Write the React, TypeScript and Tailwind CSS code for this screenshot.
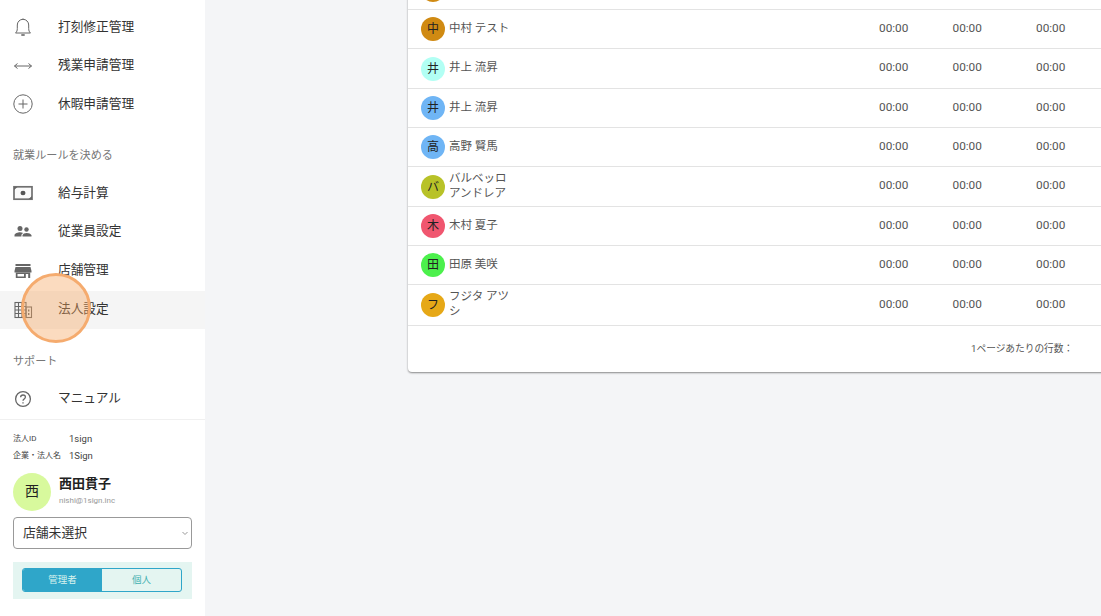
const font = { fontFamily: '"Roboto","Noto Sans CJK JP",sans-serif' };

function Bell() {
  return (
    <svg width="20" height="20" viewBox="0 0 20 20" fill="none" stroke="#666" strokeWidth="1">
      <path d="M2.500 16h15c-1.200-1-1.800-2.400-1.800-4.500V8a5.700 5.700 0 0 0-11.400 0v3.500c0 2.100-.6 3.500-1.800 4.500Z" />
      <path d="M10 1.500v1" />
      <path d="M8.300 18h3.400" strokeWidth="1.600" />
    </svg>
  );
}
function Arrows() {
  return (
    <svg width="20" height="20" viewBox="0 0 20 20" fill="none" stroke="#666" strokeWidth="1">
      <path d="M1.500 10h17M4.500 7.500 1.500 10l3 2.500M15.500 7.500l3 2.500-3 2.500" />
    </svg>
  );
}
function Plus() {
  return (
    <svg width="20" height="20" viewBox="0 0 20 20" fill="none" stroke="#666" strokeWidth="1">
      <circle cx="10" cy="10" r="9.200" />
      <path d="M10 5.500v9M5.500 10h9" />
    </svg>
  );
}
function Money() {
  return (
    <svg width="20" height="20" viewBox="0 0 20 20" fill="none">
      <rect x="1" y="3.800" width="18" height="12.400" fill="#fafafa" stroke="#707070" strokeWidth="1.700" />
      <path d="M1 4h3.500L1 7ZM19 16h-3.500l3.500-3Z" fill="#666" />
      <ellipse cx="10" cy="10" rx="2.500" ry="2.200" fill="#555" />
    </svg>
  );
}
function People() {
  return (
    <svg width="20" height="20" viewBox="0 0 20 20" fill="#666">
      <circle cx="7" cy="6.500" r="2.500" />
      <circle cx="13.500" cy="7.500" r="2.200" />
      <path d="M1.500 14.500v-1.200C1.500 11.400 5 10.300 7 10.300c.9 0 2.200.2 3.300.7-1.100.6-1.900 1.400-1.900 2.500v1h-6.900Z" />
      <path d="M9.500 14.500v-1C9.500 11.800 12 11 13.500 11s5 .8 5 2.500v1h-9Z" />
    </svg>
  );
}
function Store() {
  return (
    <svg width="20" height="20" viewBox="0 0 20 20" fill="#666">
      <rect x="2.500" y="3" width="15" height="2" />
      <path d="M2.500 6h15l1 4v1.500h-17V10l1-4Z" />
      <path fillRule="evenodd" d="M2.800 11.500h14.400V17h-2v-4h-2.400v4H2.800v-5.500Zm1.700 1.500v2.500h6.500V13H4.500Z" />
    </svg>
  );
}
function Building() {
  return (
    <svg width="20" height="20" viewBox="0 0 20 20" fill="none" stroke="#666" strokeWidth="1.100">
      <rect x="2" y="2.500" width="11" height="15" />
      <rect x="13" y="7" width="5.500" height="10.500" />
      <path d="M5.500 3v14M9 3v14M2 6.500h11M2 10h11M2 13.500h11" />
      <path d="M15.700 9.500v2M15.700 13v2" strokeWidth="1.400" />
    </svg>
  );
}
function Help() {
  return (
    <svg width="20" height="20" viewBox="0 0 20 20" fill="none" stroke="#666" strokeWidth="1.300">
      <circle cx="10" cy="10" r="7.400" />
      <path d="M7.600 8.200A2.400 2.400 0 0 1 10 6c1.400 0 2.400.9 2.400 2.100 0 1.800-2.400 1.900-2.400 3.600" />
      <path d="M10 13.200v1.300" />
    </svg>
  );
}

function NavItem({ icon, label, h = "h-[38.5px]", active = false }: { icon: React.ReactNode; label: string; h?: string; active?: boolean }) {
  return (
    <div className={`flex shrink-0 items-center pl-[13px] ${h} ${active ? "bg-[#f5f5f5]" : ""}`}>
      <span className="flex w-[20px] justify-center">{icon}</span>
      <span className="ml-[25px] pb-[1px] text-[12.7px] leading-[20px] text-[#333]">{label}</span>
    </div>
  );
}

function SectionLabel({ label, h }: { label: string; h: string }) {
  return <div className={`flex shrink-0 items-center pl-[13px] text-[11.1px] text-[#777] ${h}`}>{label}</div>;
}

const rows = [
  { c: "bg-[#d08a12]", a: "", n: "", h: "h-[39px]" },
  { c: "bg-[#d08a12]", a: "中", n: "中村 テスト", h: "h-[39px]" },
  { c: "bg-[#b2fff4]", a: "井", n: "井上 流昇", h: "h-[40px]" },
  { c: "bg-[#6fb5f5]", a: "井", n: "井上 流昇", h: "h-[39px]" },
  { c: "bg-[#6fb5f5]", a: "高", n: "高野 賢馬", h: "h-[39px]" },
  { c: "bg-[#b8c228]", a: "バ", n: "バルベッロ アンドレア", h: "h-[40px]" },
  { c: "bg-[#f0566f]", a: "木", n: "木村 夏子", h: "h-[39px]" },
  { c: "bg-[#4cf04c]", a: "田", n: "田原 美咲", h: "h-[39px]" },
  { c: "bg-[#e6a817]", a: "フ", n: "フジタ アツシ", h: "h-[41px]" },
];

export default function App() {
  return (
    <div style={font} className="relative flex h-[616px] w-[1101px] overflow-hidden bg-[#f4f5f7]">
      <aside className="flex h-[616px] w-[205px] shrink-0 flex-col bg-white pt-[8px]">
        <NavItem icon={<Bell />} label="打刻修正管理" />
        <NavItem icon={<Arrows />} label="残業申請管理" />
        <NavItem icon={<Plus />} label="休暇申請管理" />
        <SectionLabel label="就業ルールを決める" h="h-[50px] pt-[15px]" />
        <NavItem icon={<Money />} label="給与計算" h="h-[39px]" />
        <NavItem icon={<People />} label="従業員設定" h="h-[38.5px]" />
        <NavItem icon={<Store />} label="店舗管理" h="h-[39.5px]" />
        <NavItem icon={<Building />} label="法人設定" h="h-[38px]" active />
        <SectionLabel label="サポート" h="h-[50px] pt-[18px]" />
        <NavItem icon={<Help />} label="マニュアル" h="h-[40px]" />
        <div className="shrink-0 border-t border-[#f0f0f0] px-[13px] pt-[11px]">
          <div className="flex h-[17px] items-center text-[8px] text-[#444]">
            <span className="w-[56px]">法人ID</span>
            <span className="text-[9.5px]">1sign</span>
          </div>
          <div className="flex h-[17px] items-center text-[8px] text-[#444]">
            <span className="w-[56px] whitespace-nowrap">企業・法人名</span>
            <span className="text-[9.5px]">1Sign</span>
          </div>
          <div className="mt-[8px] flex items-center">
            <div className="flex h-[38px] w-[38px] items-center justify-center rounded-full bg-[#d8f99d] text-[14px] text-[#222]">西</div>
            <div className="ml-[8px] pb-[3px]">
              <div className="text-[13px] font-bold leading-[18px] text-[#222]">西田貫子</div>
              <div className="mt-[2px] text-[8px] leading-[11px] text-[#999]">nishi@1sign.inc</div>
            </div>
          </div>
          <div className="mt-[6px] flex h-[32px] w-[179px] items-center justify-between rounded-[4px] border border-[#999] pl-[9px] pr-[1px]">
            <span className="text-[12.8px] text-[#333]">店舗未選択</span>
            <svg width="10" height="10" viewBox="0 0 10 10" fill="none" stroke="#999" strokeWidth="1">
              <path d="M2.500 4 5 6.500 7.500 4" />
            </svg>
          </div>
          <div className="mt-[13px] flex h-[37px] w-[179px] items-center justify-center bg-[#e4f5f1]">
            <div className="mr-[1px] flex h-[24px] w-[160px] overflow-hidden rounded-[3px] border border-[#2fa6c9]">
              <div className="flex w-[79px] items-center justify-center bg-[#2fa6c9] text-[9.5px] text-[#d8f3ee]">管理者</div>
              <div className="flex flex-1 items-center justify-center text-[9.5px] text-[#3fb0b0]">個人</div>
            </div>
          </div>
        </div>
      </aside>

      <main className="min-w-0 flex-1 pl-[203px]">
        <div className="-mt-[29px] w-[760px] rounded-[4px] bg-white shadow-[0_1px_2px_rgba(0,0,0,0.45)]">
          {rows.map((r, i) => (
            <div key={i} className={`flex items-center border-b border-[#e3e3e3] ${r.h}`}>
              <div className="flex w-[130px] items-center pl-[13px]">
                <div className={`flex h-[24px] w-[24px] shrink-0 items-center justify-center rounded-full text-[12px] text-[#222] ${r.c}`}>{r.a}</div>
                <div className="ml-[4px] w-[64px] pb-[2px] text-[11.5px] leading-[15px] text-[#555]">{r.n}</div>
              </div>
              {r.n && (
                <div className="ml-[341px] flex pb-[1px] text-[11.8px] text-[#555]">
                  <span className="w-[73.500px]">00:00</span>
                  <span className="w-[83.500px]">00:00</span>
                  <span>00:00</span>
                </div>
              )}
            </div>
          ))}
          <div className="flex h-[46px] items-center">
            <span className="ml-[563px] whitespace-nowrap text-[9.700px] text-[#555]">1ページあたりの行数：</span>
          </div>
        </div>
      </main>

      <div className="absolute left-[21px] top-[273px] h-[70px] w-[70px] rounded-full border-[3px] border-[#f5ab6e] bg-[#f5a660]/40" />
    </div>
  );
}
